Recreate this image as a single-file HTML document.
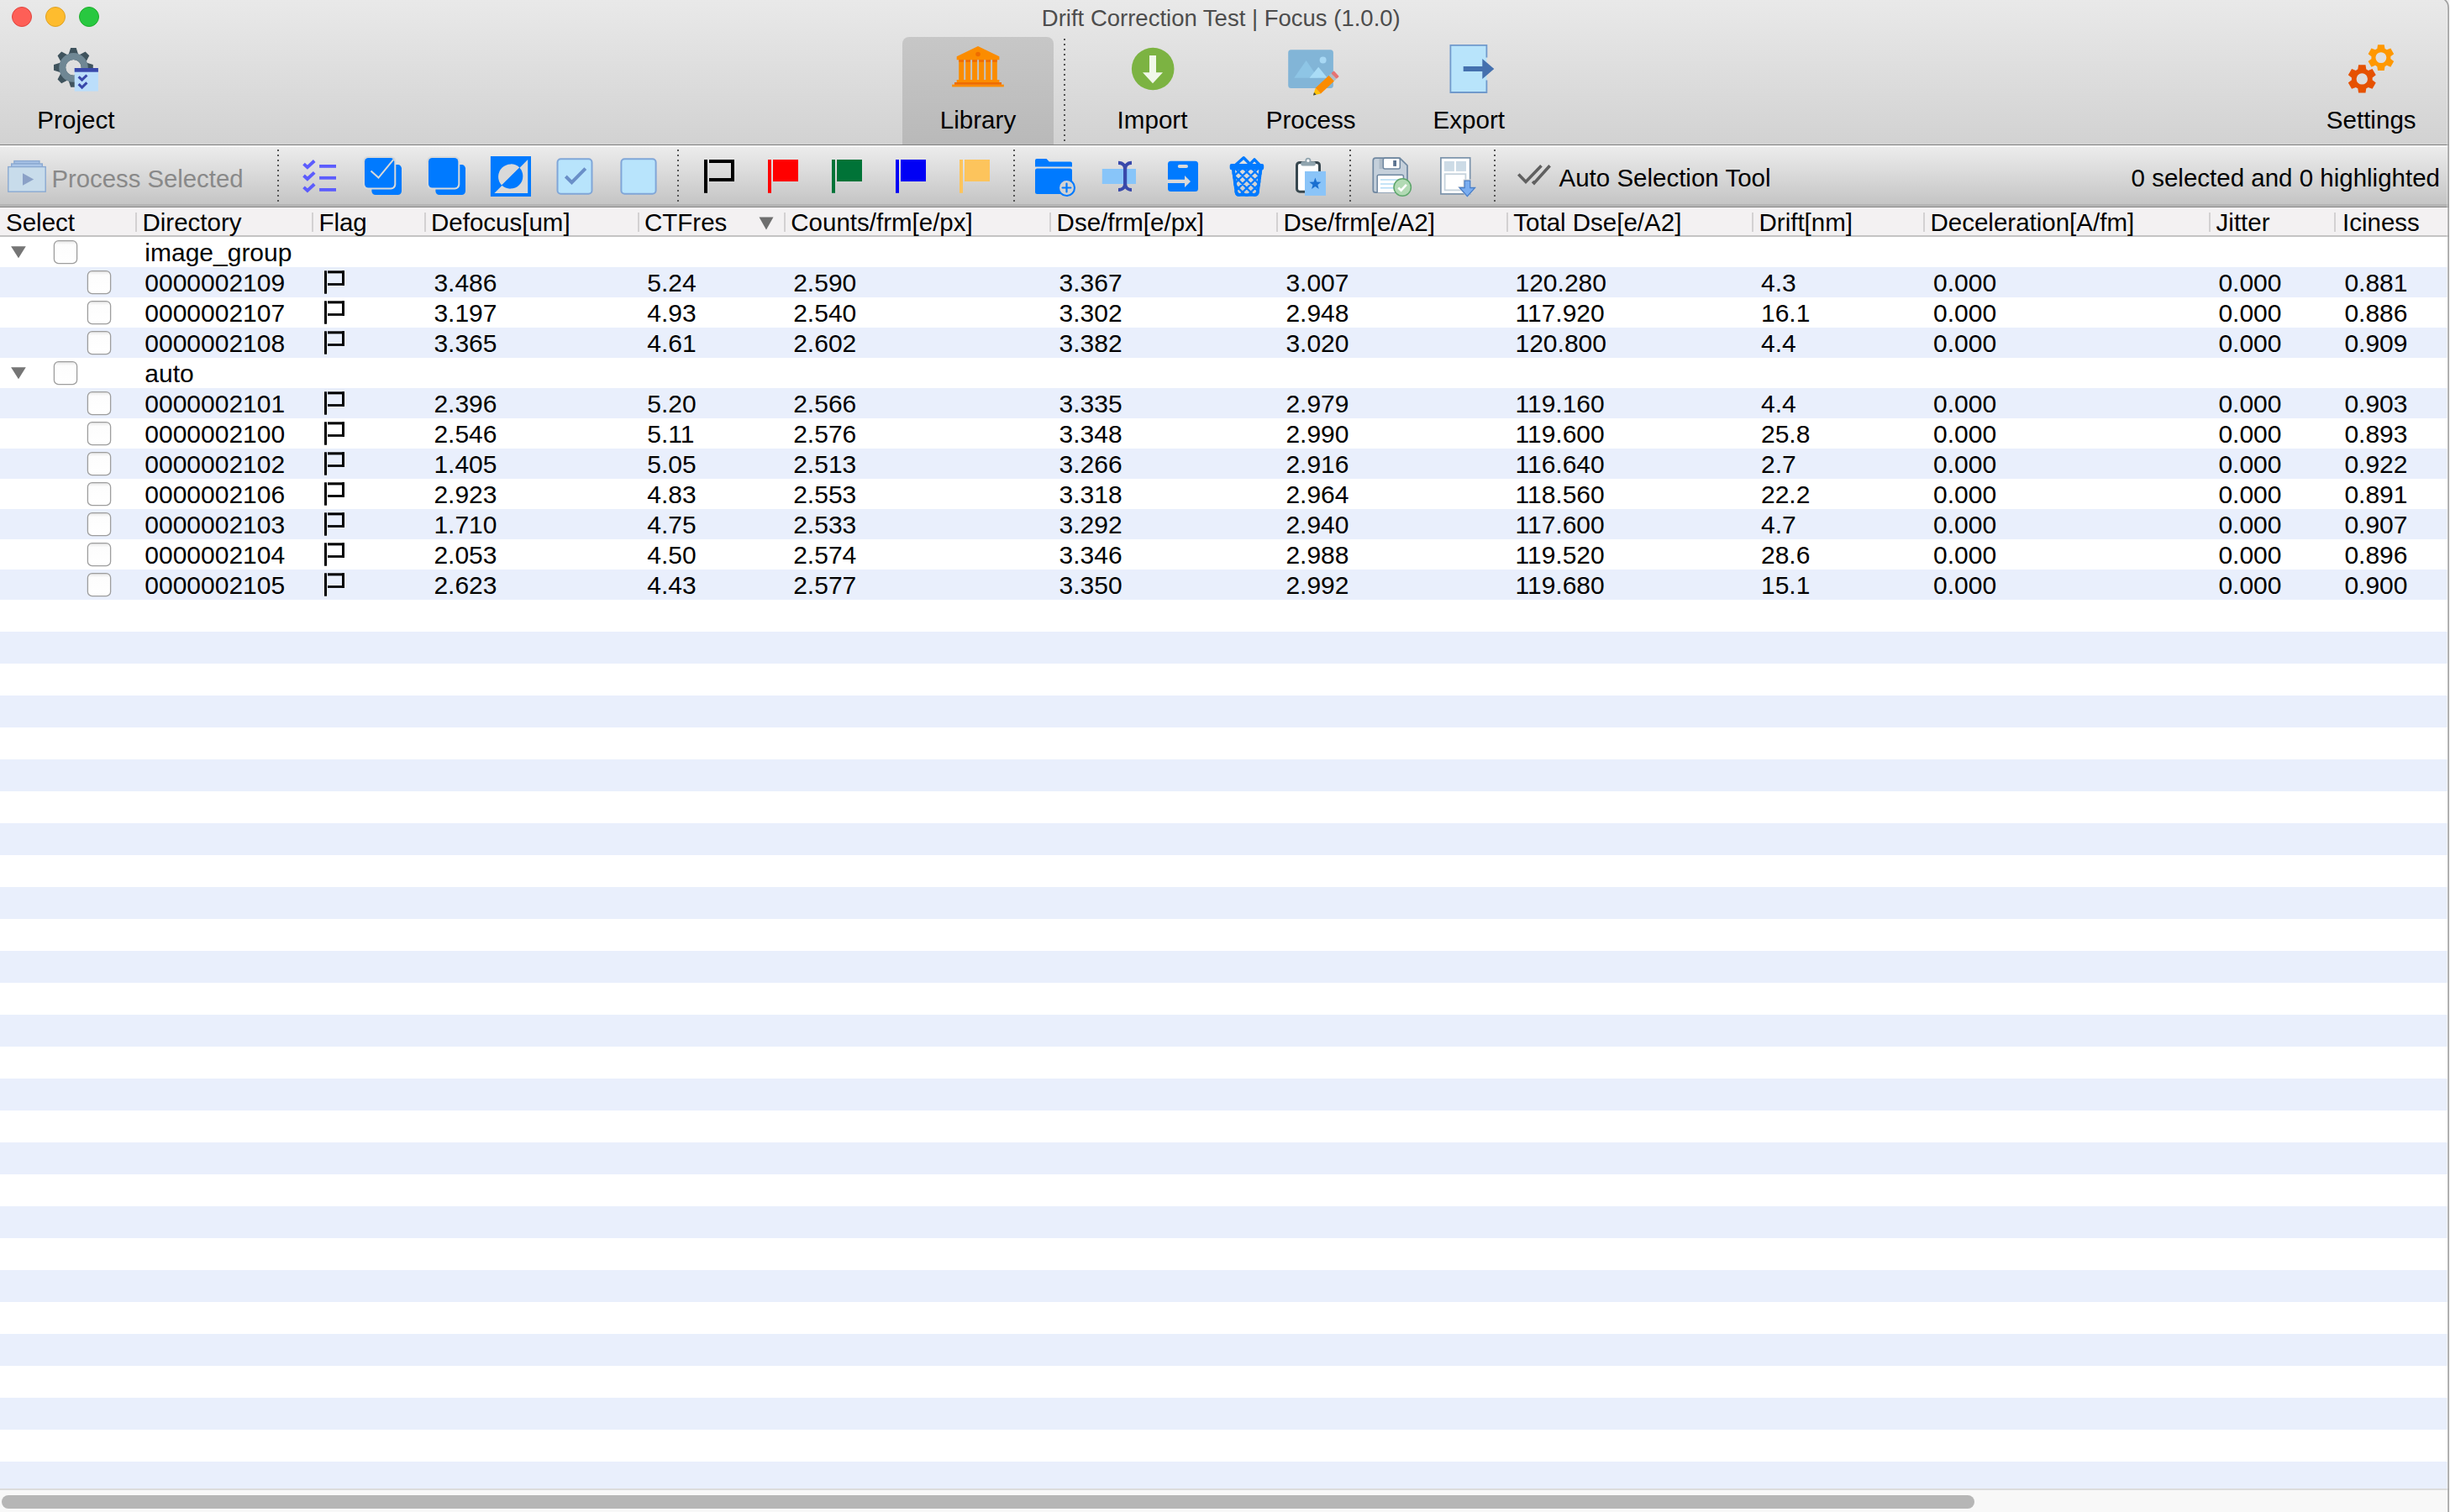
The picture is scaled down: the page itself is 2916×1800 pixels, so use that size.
<!DOCTYPE html><html><head><meta charset="utf-8"><title>Focus</title><style>
html,body{margin:0;padding:0;width:2916px;height:1800px;overflow:hidden;background:#fff;}
body{position:relative;font-family:"Liberation Sans", sans-serif;color:#000;}
.a{position:absolute;}
.t{position:absolute;white-space:nowrap;font-size:30px;line-height:36px;height:36px;}
.h{font-size:29.5px;}
.tb{position:absolute;white-space:nowrap;font-size:29px;line-height:36px;height:36px;}
svg{position:absolute;left:0;top:0;overflow:visible;}

</style></head><body>
<div class="a" style="left:0;top:0;width:2916px;height:172px;background:linear-gradient(#e9e9e9,#d2d2d2);"></div>
<div class="a" style="left:0;top:172px;width:2916px;height:1px;background:#808080;"></div>
<div class="a" style="left:0;top:173px;width:2916px;height:2px;background:#f6f6f6;"></div>
<div class="a" style="left:0;top:175px;width:2916px;height:68px;background:linear-gradient(#ececec,#c5c5c5);"></div>
<div class="a" style="left:0;top:243px;width:2916px;height:3px;background:#b4b4b4;"></div>
<div class="a" style="left:0;top:246px;width:2916px;height:1px;background:#8a8a8a;"></div>
<div class="a" style="left:0;top:247px;width:2916px;height:33px;background:#f3f1f2;"></div>
<div class="a" style="left:0;top:280px;width:2916px;height:2px;background:#c4c4c4;"></div>
<div class="a" style="left:1074px;top:44px;width:180px;height:128px;border-radius:8px 8px 0 0;background:linear-gradient(#c7c7c7,#b9b9b9);"></div>
<div class="a" style="left:0;top:1772px;width:2916px;height:2px;background:#dcdcdc;"></div>
<div class="a" style="left:0;top:1774px;width:2916px;height:26px;background:#f8f8f8;"></div>
<div class="a" style="left:2px;top:1780px;width:2348px;height:16px;border-radius:8px;background:#b6b6b6;"></div>
<div class="a" style="left:2915px;top:0;width:1px;height:1800px;background:#fafafa;"></div>

<div class="a" style="left:0;top:318px;width:2913px;height:36px;background:#e9effc;"></div>
<div class="a" style="left:0;top:390px;width:2913px;height:36px;background:#e9effc;"></div>
<div class="a" style="left:0;top:462px;width:2913px;height:36px;background:#e9effc;"></div>
<div class="a" style="left:0;top:534px;width:2913px;height:36px;background:#e9effc;"></div>
<div class="a" style="left:0;top:606px;width:2913px;height:36px;background:#e9effc;"></div>
<div class="a" style="left:0;top:678px;width:2913px;height:36px;background:#e9effc;"></div>
<div class="a" style="left:0;top:752px;width:2913px;height:38px;background:#e9effc;"></div>
<div class="a" style="left:0;top:828px;width:2913px;height:38px;background:#e9effc;"></div>
<div class="a" style="left:0;top:904px;width:2913px;height:38px;background:#e9effc;"></div>
<div class="a" style="left:0;top:980px;width:2913px;height:38px;background:#e9effc;"></div>
<div class="a" style="left:0;top:1056px;width:2913px;height:38px;background:#e9effc;"></div>
<div class="a" style="left:0;top:1132px;width:2913px;height:38px;background:#e9effc;"></div>
<div class="a" style="left:0;top:1208px;width:2913px;height:38px;background:#e9effc;"></div>
<div class="a" style="left:0;top:1284px;width:2913px;height:38px;background:#e9effc;"></div>
<div class="a" style="left:0;top:1360px;width:2913px;height:38px;background:#e9effc;"></div>
<div class="a" style="left:0;top:1436px;width:2913px;height:38px;background:#e9effc;"></div>
<div class="a" style="left:0;top:1512px;width:2913px;height:38px;background:#e9effc;"></div>
<div class="a" style="left:0;top:1588px;width:2913px;height:38px;background:#e9effc;"></div>
<div class="a" style="left:0;top:1664px;width:2913px;height:38px;background:#e9effc;"></div>
<div class="a" style="left:0;top:1740px;width:2913px;height:32px;background:#e9effc;"></div>
<div class="a" style="left:161px;top:253px;width:2px;height:23px;background:#d3d1d2;"></div>
<div class="a" style="left:371px;top:253px;width:2px;height:23px;background:#d3d1d2;"></div>
<div class="a" style="left:505px;top:253px;width:2px;height:23px;background:#d3d1d2;"></div>
<div class="a" style="left:759px;top:253px;width:2px;height:23px;background:#d3d1d2;"></div>
<div class="a" style="left:933px;top:253px;width:2px;height:23px;background:#d3d1d2;"></div>
<div class="a" style="left:1249px;top:253px;width:2px;height:23px;background:#d3d1d2;"></div>
<div class="a" style="left:1519px;top:253px;width:2px;height:23px;background:#d3d1d2;"></div>
<div class="a" style="left:1793px;top:253px;width:2px;height:23px;background:#d3d1d2;"></div>
<div class="a" style="left:2085px;top:253px;width:2px;height:23px;background:#d3d1d2;"></div>
<div class="a" style="left:2289px;top:253px;width:2px;height:23px;background:#d3d1d2;"></div>
<div class="a" style="left:2629px;top:253px;width:2px;height:23px;background:#d3d1d2;"></div>
<div class="a" style="left:2778px;top:253px;width:2px;height:23px;background:#d3d1d2;"></div>
<div class="t h" style="left:7.0px;top:247px;">Select</div>
<div class="t h" style="left:169.5px;top:247px;">Directory</div>
<div class="t h" style="left:379.4px;top:247px;">Flag</div>
<div class="t h" style="left:513.0px;top:247px;">Defocus[um]</div>
<div class="t h" style="left:767.0px;top:247px;">CTFres</div>
<div class="t h" style="left:941.3px;top:247px;">Counts/frm[e/px]</div>
<div class="t h" style="left:1257.6px;top:247px;">Dse/frm[e/px]</div>
<div class="t h" style="left:1527.5px;top:247px;">Dse/frm[e/A2]</div>
<div class="t h" style="left:1801.3px;top:247px;">Total Dse[e/A2]</div>
<div class="t h" style="left:2093.5px;top:247px;">Drift[nm]</div>
<div class="t h" style="left:2297.5px;top:247px;">Deceleration[A/fm]</div>
<div class="t h" style="left:2637.6px;top:247px;">Jitter</div>
<div class="t h" style="left:2788.0px;top:247px;">Iciness</div>
<svg width="2916" height="1800"><path d="M903.5 258.5 L920.5 258.5 L912 273.5 Z" fill="#6e6e6e"/></svg>
<div class="t" style="left:172.3px;top:283px;">image_group</div>
<div class="t" style="left:172.3px;top:319px;">0000002109</div>
<div class="t" style="left:516.4px;top:319px;">3.486</div>
<div class="t" style="left:770.3px;top:319px;">5.24</div>
<div class="t" style="left:944.2px;top:319px;">2.590</div>
<div class="t" style="left:1260.5px;top:319px;">3.367</div>
<div class="t" style="left:1530.4px;top:319px;">3.007</div>
<div class="t" style="left:1803.5px;top:319px;">120.280</div>
<div class="t" style="left:2096.0px;top:319px;">4.3</div>
<div class="t" style="left:2301.0px;top:319px;">0.000</div>
<div class="t" style="left:2640.4px;top:319px;">0.000</div>
<div class="t" style="left:2790.4px;top:319px;">0.881</div>
<div class="t" style="left:172.3px;top:355px;">0000002107</div>
<div class="t" style="left:516.4px;top:355px;">3.197</div>
<div class="t" style="left:770.3px;top:355px;">4.93</div>
<div class="t" style="left:944.2px;top:355px;">2.540</div>
<div class="t" style="left:1260.5px;top:355px;">3.302</div>
<div class="t" style="left:1530.4px;top:355px;">2.948</div>
<div class="t" style="left:1803.5px;top:355px;">117.920</div>
<div class="t" style="left:2096.0px;top:355px;">16.1</div>
<div class="t" style="left:2301.0px;top:355px;">0.000</div>
<div class="t" style="left:2640.4px;top:355px;">0.000</div>
<div class="t" style="left:2790.4px;top:355px;">0.886</div>
<div class="t" style="left:172.3px;top:391px;">0000002108</div>
<div class="t" style="left:516.4px;top:391px;">3.365</div>
<div class="t" style="left:770.3px;top:391px;">4.61</div>
<div class="t" style="left:944.2px;top:391px;">2.602</div>
<div class="t" style="left:1260.5px;top:391px;">3.382</div>
<div class="t" style="left:1530.4px;top:391px;">3.020</div>
<div class="t" style="left:1803.5px;top:391px;">120.800</div>
<div class="t" style="left:2096.0px;top:391px;">4.4</div>
<div class="t" style="left:2301.0px;top:391px;">0.000</div>
<div class="t" style="left:2640.4px;top:391px;">0.000</div>
<div class="t" style="left:2790.4px;top:391px;">0.909</div>
<div class="t" style="left:172.3px;top:427px;">auto</div>
<div class="t" style="left:172.3px;top:463px;">0000002101</div>
<div class="t" style="left:516.4px;top:463px;">2.396</div>
<div class="t" style="left:770.3px;top:463px;">5.20</div>
<div class="t" style="left:944.2px;top:463px;">2.566</div>
<div class="t" style="left:1260.5px;top:463px;">3.335</div>
<div class="t" style="left:1530.4px;top:463px;">2.979</div>
<div class="t" style="left:1803.5px;top:463px;">119.160</div>
<div class="t" style="left:2096.0px;top:463px;">4.4</div>
<div class="t" style="left:2301.0px;top:463px;">0.000</div>
<div class="t" style="left:2640.4px;top:463px;">0.000</div>
<div class="t" style="left:2790.4px;top:463px;">0.903</div>
<div class="t" style="left:172.3px;top:499px;">0000002100</div>
<div class="t" style="left:516.4px;top:499px;">2.546</div>
<div class="t" style="left:770.3px;top:499px;">5.11</div>
<div class="t" style="left:944.2px;top:499px;">2.576</div>
<div class="t" style="left:1260.5px;top:499px;">3.348</div>
<div class="t" style="left:1530.4px;top:499px;">2.990</div>
<div class="t" style="left:1803.5px;top:499px;">119.600</div>
<div class="t" style="left:2096.0px;top:499px;">25.8</div>
<div class="t" style="left:2301.0px;top:499px;">0.000</div>
<div class="t" style="left:2640.4px;top:499px;">0.000</div>
<div class="t" style="left:2790.4px;top:499px;">0.893</div>
<div class="t" style="left:172.3px;top:535px;">0000002102</div>
<div class="t" style="left:516.4px;top:535px;">1.405</div>
<div class="t" style="left:770.3px;top:535px;">5.05</div>
<div class="t" style="left:944.2px;top:535px;">2.513</div>
<div class="t" style="left:1260.5px;top:535px;">3.266</div>
<div class="t" style="left:1530.4px;top:535px;">2.916</div>
<div class="t" style="left:1803.5px;top:535px;">116.640</div>
<div class="t" style="left:2096.0px;top:535px;">2.7</div>
<div class="t" style="left:2301.0px;top:535px;">0.000</div>
<div class="t" style="left:2640.4px;top:535px;">0.000</div>
<div class="t" style="left:2790.4px;top:535px;">0.922</div>
<div class="t" style="left:172.3px;top:571px;">0000002106</div>
<div class="t" style="left:516.4px;top:571px;">2.923</div>
<div class="t" style="left:770.3px;top:571px;">4.83</div>
<div class="t" style="left:944.2px;top:571px;">2.553</div>
<div class="t" style="left:1260.5px;top:571px;">3.318</div>
<div class="t" style="left:1530.4px;top:571px;">2.964</div>
<div class="t" style="left:1803.5px;top:571px;">118.560</div>
<div class="t" style="left:2096.0px;top:571px;">22.2</div>
<div class="t" style="left:2301.0px;top:571px;">0.000</div>
<div class="t" style="left:2640.4px;top:571px;">0.000</div>
<div class="t" style="left:2790.4px;top:571px;">0.891</div>
<div class="t" style="left:172.3px;top:607px;">0000002103</div>
<div class="t" style="left:516.4px;top:607px;">1.710</div>
<div class="t" style="left:770.3px;top:607px;">4.75</div>
<div class="t" style="left:944.2px;top:607px;">2.533</div>
<div class="t" style="left:1260.5px;top:607px;">3.292</div>
<div class="t" style="left:1530.4px;top:607px;">2.940</div>
<div class="t" style="left:1803.5px;top:607px;">117.600</div>
<div class="t" style="left:2096.0px;top:607px;">4.7</div>
<div class="t" style="left:2301.0px;top:607px;">0.000</div>
<div class="t" style="left:2640.4px;top:607px;">0.000</div>
<div class="t" style="left:2790.4px;top:607px;">0.907</div>
<div class="t" style="left:172.3px;top:643px;">0000002104</div>
<div class="t" style="left:516.4px;top:643px;">2.053</div>
<div class="t" style="left:770.3px;top:643px;">4.50</div>
<div class="t" style="left:944.2px;top:643px;">2.574</div>
<div class="t" style="left:1260.5px;top:643px;">3.346</div>
<div class="t" style="left:1530.4px;top:643px;">2.988</div>
<div class="t" style="left:1803.5px;top:643px;">119.520</div>
<div class="t" style="left:2096.0px;top:643px;">28.6</div>
<div class="t" style="left:2301.0px;top:643px;">0.000</div>
<div class="t" style="left:2640.4px;top:643px;">0.000</div>
<div class="t" style="left:2790.4px;top:643px;">0.896</div>
<div class="t" style="left:172.3px;top:679px;">0000002105</div>
<div class="t" style="left:516.4px;top:679px;">2.623</div>
<div class="t" style="left:770.3px;top:679px;">4.43</div>
<div class="t" style="left:944.2px;top:679px;">2.577</div>
<div class="t" style="left:1260.5px;top:679px;">3.350</div>
<div class="t" style="left:1530.4px;top:679px;">2.992</div>
<div class="t" style="left:1803.5px;top:679px;">119.680</div>
<div class="t" style="left:2096.0px;top:679px;">15.1</div>
<div class="t" style="left:2301.0px;top:679px;">0.000</div>
<div class="t" style="left:2640.4px;top:679px;">0.000</div>
<div class="t" style="left:2790.4px;top:679px;">0.900</div>
<div class="a" style="left:1053.3px;top:3.5px;width:800px;text-align:center;white-space:nowrap;font-size:27.5px;line-height:36px;color:#4d4d4d;">Drift Correction Test | Focus (1.0.0)</div>
<div class="a" style="left:-109.6px;top:124.6px;width:400px;text-align:center;white-space:nowrap;font-size:29.6px;line-height:36px;color:#000;">Project</div>
<div class="a" style="left:964.0px;top:124.6px;width:400px;text-align:center;white-space:nowrap;font-size:29.6px;line-height:36px;color:#000;">Library</div>
<div class="a" style="left:1171.5px;top:124.6px;width:400px;text-align:center;white-space:nowrap;font-size:29.6px;line-height:36px;color:#000;">Import</div>
<div class="a" style="left:1360.2px;top:124.6px;width:400px;text-align:center;white-space:nowrap;font-size:29.6px;line-height:36px;color:#000;">Process</div>
<div class="a" style="left:1548.3px;top:124.6px;width:400px;text-align:center;white-space:nowrap;font-size:29.6px;line-height:36px;color:#000;">Export</div>
<div class="a" style="left:2622.2px;top:124.6px;width:400px;text-align:center;white-space:nowrap;font-size:29.6px;line-height:36px;color:#000;">Settings</div>
<div class="a" style="left:61.5px;top:194.5px;white-space:nowrap;font-size:29.3px;line-height:36px;color:#898989;">Process Selected</div>
<div class="a" style="left:1855.5px;top:194px;white-space:nowrap;font-size:29.5px;line-height:36px;color:#000;">Auto Selection Tool</div>
<div class="a" style="left:2300px;width:604px;text-align:right;top:194px;white-space:nowrap;font-size:29.5px;line-height:36px;">0 selected and 0 highlighted</div>
<svg width="2916" height="1800" viewBox="0 0 2916 1800">
<circle cx="26" cy="20" r="11.5" fill="#fe5f57" stroke="#e0443e" stroke-width="1"/>
<circle cx="66" cy="20" r="11.5" fill="#febc2e" stroke="#dea123" stroke-width="1"/>
<circle cx="106" cy="20" r="11.5" fill="#28c840" stroke="#1dad2b" stroke-width="1"/>
<path fill="#3f535d" fill-rule="evenodd" d="M81.50 65.21L84.10 57.03L90.70 57.03L93.30 65.21A16.3 16.3 0 0 1 93.97 65.48L101.59 61.54L106.26 66.21L102.32 73.83A16.3 16.3 0 0 1 102.59 74.50L110.77 77.10L110.77 83.70L102.59 86.30A16.3 16.3 0 0 1 102.32 86.97L106.26 94.59L101.59 99.26L93.97 95.32A16.3 16.3 0 0 1 93.30 95.59L90.70 103.77L84.10 103.77L81.50 95.59A16.3 16.3 0 0 1 80.83 95.32L73.21 99.26L68.54 94.59L72.48 86.97A16.3 16.3 0 0 1 72.21 86.30L64.03 83.70L64.03 77.10L72.21 74.50A16.3 16.3 0 0 1 72.48 73.83L68.54 66.21L73.21 61.54L80.83 65.48A16.3 16.3 0 0 1 81.50 65.21ZM78.10 80.40a9.3 9.3 0 1 0 18.60 0a9.3 9.3 0 1 0 -18.60 0Z"/>
<path fill="#6f8794" fill-rule="evenodd" d="M70.2 80.4a17.3 17.3 0 1 0 34.6 0a17.3 17.3 0 1 0 -34.6 0Z M78.2 80.4a9.3 9.3 0 1 0 18.6 0a9.3 9.3 0 1 0 -18.6 0Z"/>
<rect x="88.7" y="81" width="28.2" height="27.6" fill="#bbdefb"/>
<rect x="88.7" y="81" width="28.2" height="4.7" fill="#3949ab"/>
<path d="M93.6 91.3 L97.6 95.1 L103.4 89.5 M93.6 100.2 L97.6 104 L103.4 98.4" fill="none" stroke="#3949ab" stroke-width="3.1"/>
<g fill="#fb8c00"><path d="M1164 55 L1189.4 67.2 L1189.4 71.2 L1138.7 71.2 L1138.7 67.2 Z"/><rect x="1141.2" y="71.2" width="45.6" height="23.8"/><rect x="1138.7" y="95" width="50.7" height="3.2"/><rect x="1133.2" y="100.6" width="61.6" height="2.8"/></g>
<circle cx="1164" cy="64.5" r="2.8" fill="#ef6c00"/>
<rect x="1141.2" y="71.2" width="45.6" height="2.6" fill="#ef6c00"/>
<rect x="1136" y="98" width="56" height="2.8" fill="#ef6c00"/>
<rect x="1147.2" y="71.2" width="2" height="23.8" fill="#c3c3c3"/>
<rect x="1155.1" y="71.2" width="2" height="23.8" fill="#c3c3c3"/>
<rect x="1163.1" y="71.2" width="2" height="23.8" fill="#c3c3c3"/>
<rect x="1171.2" y="71.2" width="2" height="23.8" fill="#c3c3c3"/>
<rect x="1179.1" y="71.2" width="2" height="23.8" fill="#c3c3c3"/>
<circle cx="1372.2" cy="82" r="25.3" fill="#7cb342"/>
<path d="M1368 66 H1376 V86.3 H1384 L1372 99.2 L1360 86.3 H1368 Z" fill="#f1f8e9"/>
<rect x="1533.2" y="59.2" width="53.7" height="45.8" rx="3.5" fill="#82b5d7"/>
<path d="M1540.3 92.8 L1554.6 72 L1568.9 92.8 Z" fill="#8ec5e5"/>
<path d="M1558.6 92.8 L1569.2 79.8 L1579.8 92.8 Z" fill="#a9dcf6"/>
<circle cx="1574.6" cy="71.4" r="4" fill="#a8d8f4"/>
<g transform="translate(1563,113.6) rotate(-43.2)"><path d="M0 0 L8 -4.6 L8 4.6 Z" fill="#ffc107"/><path d="M0 0 L3.2 -1.8 L3.2 1.8 Z" fill="#37474f"/><rect x="8" y="-4.6" width="22" height="9.2" fill="#fb8c00"/><rect x="30" y="-4.6" width="3.6" height="9.2" fill="#b0bec5"/><rect x="33.6" y="-4.6" width="4.4" height="9.2" rx="1" fill="#e57373"/></g>
<rect x="1726.4" y="53.9" width="43" height="56.1" fill="#b8e4fb"/>
<path d="M1769.4 68.6 V53.9 H1726.4 V110 H1769.4 V95.4" fill="none" stroke="#7099cb" stroke-width="1.8"/>
<path d="M1741.7 79 H1764.3 V70 L1778.3 82 L1764.3 93.9 V85 H1741.7 Z" fill="#4470ae"/>
<path fill="#ff9800" fill-rule="evenodd" d="M2829.30 58.06L2830.05 53.17L2837.75 53.17L2838.50 58.06A11.5 11.5 0 0 1 2840.73 59.35L2845.34 57.55L2849.19 64.22L2845.33 67.31A11.5 11.5 0 0 1 2845.33 69.89L2849.19 72.98L2845.34 79.65L2840.73 77.85A11.5 11.5 0 0 1 2838.50 79.14L2837.75 84.03L2830.05 84.03L2829.30 79.14A11.5 11.5 0 0 1 2827.07 77.85L2822.46 79.65L2818.61 72.98L2822.47 69.89A11.5 11.5 0 0 1 2822.47 67.31L2818.61 64.22L2822.46 57.55L2827.07 59.35A11.5 11.5 0 0 1 2829.30 58.06ZM2827.45 68.60a6.45 6.45 0 1 0 12.90 0a6.45 6.45 0 1 0 -12.90 0Z"/>
<path fill="#e65100" fill-rule="evenodd" d="M2806.30 82.55L2807.10 77.32L2815.50 77.32L2816.30 82.55A12.4 12.4 0 0 1 2818.63 83.90L2823.56 81.97L2827.76 89.25L2823.63 92.56A12.4 12.4 0 0 1 2823.63 95.24L2827.76 98.55L2823.56 105.83L2818.63 103.90A12.4 12.4 0 0 1 2816.30 105.25L2815.50 110.48L2807.10 110.48L2806.30 105.25A12.4 12.4 0 0 1 2803.97 103.90L2799.04 105.83L2794.84 98.55L2798.97 95.24A12.4 12.4 0 0 1 2798.97 92.56L2794.84 89.25L2799.04 81.97L2803.97 83.90A12.4 12.4 0 0 1 2806.30 82.55ZM2804.60 93.90a6.7 6.7 0 1 0 13.40 0a6.7 6.7 0 1 0 -13.40 0Z"/>
<rect x="1266" y="46" width="2" height="2" fill="#555"/><rect x="1266" y="52" width="2" height="2" fill="#555"/><rect x="1266" y="58" width="2" height="2" fill="#555"/><rect x="1266" y="64" width="2" height="2" fill="#555"/><rect x="1266" y="70" width="2" height="2" fill="#555"/><rect x="1266" y="76" width="2" height="2" fill="#555"/><rect x="1266" y="82" width="2" height="2" fill="#555"/><rect x="1266" y="88" width="2" height="2" fill="#555"/><rect x="1266" y="94" width="2" height="2" fill="#555"/><rect x="1266" y="100" width="2" height="2" fill="#555"/><rect x="1266" y="106" width="2" height="2" fill="#555"/><rect x="1266" y="112" width="2" height="2" fill="#555"/><rect x="1266" y="118" width="2" height="2" fill="#555"/><rect x="1266" y="124" width="2" height="2" fill="#555"/><rect x="1266" y="130" width="2" height="2" fill="#555"/><rect x="1266" y="136" width="2" height="2" fill="#555"/><rect x="1266" y="142" width="2" height="2" fill="#555"/><rect x="1266" y="148" width="2" height="2" fill="#555"/><rect x="1266" y="154" width="2" height="2" fill="#555"/><rect x="1266" y="160" width="2" height="2" fill="#555"/><rect x="1266" y="166" width="2" height="2" fill="#555"/>
<rect x="330" y="178" width="2" height="2" fill="#555"/><rect x="330" y="184" width="2" height="2" fill="#555"/><rect x="330" y="190" width="2" height="2" fill="#555"/><rect x="330" y="196" width="2" height="2" fill="#555"/><rect x="330" y="202" width="2" height="2" fill="#555"/><rect x="330" y="208" width="2" height="2" fill="#555"/><rect x="330" y="214" width="2" height="2" fill="#555"/><rect x="330" y="220" width="2" height="2" fill="#555"/><rect x="330" y="226" width="2" height="2" fill="#555"/><rect x="330" y="232" width="2" height="2" fill="#555"/><rect x="330" y="238" width="2" height="2" fill="#555"/>
<rect x="806" y="178" width="2" height="2" fill="#555"/><rect x="806" y="184" width="2" height="2" fill="#555"/><rect x="806" y="190" width="2" height="2" fill="#555"/><rect x="806" y="196" width="2" height="2" fill="#555"/><rect x="806" y="202" width="2" height="2" fill="#555"/><rect x="806" y="208" width="2" height="2" fill="#555"/><rect x="806" y="214" width="2" height="2" fill="#555"/><rect x="806" y="220" width="2" height="2" fill="#555"/><rect x="806" y="226" width="2" height="2" fill="#555"/><rect x="806" y="232" width="2" height="2" fill="#555"/><rect x="806" y="238" width="2" height="2" fill="#555"/>
<rect x="1206" y="178" width="2" height="2" fill="#555"/><rect x="1206" y="184" width="2" height="2" fill="#555"/><rect x="1206" y="190" width="2" height="2" fill="#555"/><rect x="1206" y="196" width="2" height="2" fill="#555"/><rect x="1206" y="202" width="2" height="2" fill="#555"/><rect x="1206" y="208" width="2" height="2" fill="#555"/><rect x="1206" y="214" width="2" height="2" fill="#555"/><rect x="1206" y="220" width="2" height="2" fill="#555"/><rect x="1206" y="226" width="2" height="2" fill="#555"/><rect x="1206" y="232" width="2" height="2" fill="#555"/><rect x="1206" y="238" width="2" height="2" fill="#555"/>
<rect x="1606" y="178" width="2" height="2" fill="#555"/><rect x="1606" y="184" width="2" height="2" fill="#555"/><rect x="1606" y="190" width="2" height="2" fill="#555"/><rect x="1606" y="196" width="2" height="2" fill="#555"/><rect x="1606" y="202" width="2" height="2" fill="#555"/><rect x="1606" y="208" width="2" height="2" fill="#555"/><rect x="1606" y="214" width="2" height="2" fill="#555"/><rect x="1606" y="220" width="2" height="2" fill="#555"/><rect x="1606" y="226" width="2" height="2" fill="#555"/><rect x="1606" y="232" width="2" height="2" fill="#555"/><rect x="1606" y="238" width="2" height="2" fill="#555"/>
<rect x="1778" y="178" width="2" height="2" fill="#555"/><rect x="1778" y="184" width="2" height="2" fill="#555"/><rect x="1778" y="190" width="2" height="2" fill="#555"/><rect x="1778" y="196" width="2" height="2" fill="#555"/><rect x="1778" y="202" width="2" height="2" fill="#555"/><rect x="1778" y="208" width="2" height="2" fill="#555"/><rect x="1778" y="214" width="2" height="2" fill="#555"/><rect x="1778" y="220" width="2" height="2" fill="#555"/><rect x="1778" y="226" width="2" height="2" fill="#555"/><rect x="1778" y="232" width="2" height="2" fill="#555"/><rect x="1778" y="238" width="2" height="2" fill="#555"/>
<g stroke="#8ba9d1" stroke-width="1.4"><rect x="16.9" y="191.6" width="30" height="3.4" fill="#a5c1e6"/><rect x="13.7" y="195" width="36.6" height="3.6" fill="#aec9ea"/><rect x="9.8" y="198.6" width="44.4" height="29.6" fill="#c8dceb"/></g>
<path d="M27 206.3 L40.2 213.5 L27 220.8 Z" fill="#8ba1c7"/>
<g stroke="#5c5cfd" stroke-width="3.9" fill="none" stroke-linecap="butt" stroke-linejoin="miter"><path d="M361.5 195.1 L365.9 199.1 L374.2 191.5"/><path d="M361.5 209.0 L365.9 213.0 L374.2 205.4"/><path d="M361.5 222.9 L365.9 226.9 L374.2 219.3"/></g>
<g fill="#5c5cfd"><rect x="380.1" y="196" width="19.9" height="3.8"/><rect x="380.1" y="209.9" width="19.9" height="3.8"/><rect x="380.1" y="224" width="19.9" height="3.8"/></g>
<rect x="442.4" y="196.1" width="35.6" height="35.9" rx="4.5" fill="#007aff"/>
<rect x="432" y="186" width="39.3" height="39.5" rx="6" fill="#d9d9d9"/>
<rect x="434" y="188" width="35.3" height="35.5" rx="4.5" fill="#007aff"/>
<path d="M441.5 203.5 L450.5 211.6 L468.6 189.6" fill="none" stroke="#d9d9d9" stroke-width="2"/>
<rect x="518.4" y="196.1" width="35.6" height="35.9" rx="4.5" fill="#007aff"/>
<rect x="508" y="186" width="39.3" height="39.5" rx="6" fill="#d9d9d9"/>
<rect x="510" y="188" width="35.3" height="35.5" rx="4.5" fill="#007aff"/>
<rect x="583.9" y="186" width="48.1" height="48" fill="#007aff"/>
<path d="M588.4 230 L628.2 230 L628.2 190.1 Z" fill="#d9d9d9"/>
<path d="M597.1 220.6 A15 15 0 0 1 618.3 199.4 Z" fill="#d9d9d9"/>
<path d="M597.1 220.6 A15 15 0 0 0 618.3 199.4 Z" fill="#007aff"/>
<rect x="663.5" y="189.3" width="41" height="41.5" rx="4" fill="#b8e4fc" stroke="#80a6d8" stroke-width="2"/>
<path d="M673.3 210 L680.5 217.2 L696.8 200.6" fill="none" stroke="#6a8fc8" stroke-width="4"/>
<rect x="739.4" y="189.3" width="41.2" height="41.5" rx="4" fill="#b8e4fc" stroke="#80a6d8" stroke-width="2"/>
<g fill="#000"><rect x="838" y="190" width="4" height="39.8"/><rect x="844" y="190" width="30" height="4"/><rect x="844" y="212" width="30" height="4"/><rect x="870" y="190" width="4" height="26"/></g>
<g fill="#ff0000"><rect x="914" y="190" width="4" height="39.8"/><rect x="920" y="190" width="30" height="26"/></g>
<g fill="#007337"><rect x="990" y="190" width="4" height="39.8"/><rect x="996" y="190" width="30" height="26"/></g>
<g fill="#0000f5"><rect x="1066" y="190" width="4" height="39.8"/><rect x="1072" y="190" width="30" height="26"/></g>
<g fill="#fdc45c"><rect x="1142" y="190" width="4" height="39.8"/><rect x="1148" y="190" width="30" height="26"/></g>
<path d="M1232 191 Q1232 188.9 1234 188.9 L1245.5 188.9 L1248.8 192.5 L1274 192.5 Q1276 192.5 1276 194.5 L1276 198.5 L1232 198.5 Z" fill="#007aff"/>
<rect x="1232" y="200.4" width="44" height="30.7" rx="2.5" fill="#007aff"/>
<circle cx="1269.5" cy="223.5" r="9.5" fill="#d2d2d2" stroke="#007aff" stroke-width="2.1"/>
<path d="M1264.6 223.5 H1274.4 M1269.5 218.6 V228.4" stroke="#007aff" stroke-width="2.2" stroke-linecap="round"/>
<rect x="1311.8" y="201" width="40.2" height="18" fill="#88c5f9"/>
<path d="M1331 191.8 Q1336 191.8 1339.1 195.2 Q1342.2 191.8 1347 191.8 V196 Q1341.2 196 1341.2 201 V219 Q1341.2 224 1347 224 V228 Q1342.2 228 1339.1 224.6 Q1336 228 1331 228 V224 Q1337 224 1337 219 V201 Q1337 196 1331 196 Z" fill="#3949ab"/>
<rect x="1390" y="191.8" width="36" height="36.2" rx="3.5" fill="#007aff"/>
<rect x="1401.8" y="196" width="12.2" height="4.1" rx="2" fill="#d9d9d9"/>
<path d="M1389 213.8 H1410 V209 L1417 216 L1410 223 V218 H1389 Z" fill="#d9d9d9"/>
<defs><clipPath id="basket"><path d="M1466 202 L1502.3 202 L1498.6 229.3 Q1498 233.8 1493.5 233.8 L1474.8 233.8 Q1470.3 233.8 1469.7 229.3 Z"/></clipPath></defs>
<path clip-path="url(#basket)" d="M1415.6 195 L1460.6 240 M1444.2 195 L1399.2 240 M1425.4 195 L1470.4 240 M1454.0 195 L1409.0 240 M1435.2 195 L1480.2 240 M1463.8 195 L1418.8 240 M1445.0 195 L1490.0 240 M1473.6 195 L1428.6 240 M1454.8 195 L1499.8 240 M1483.4 195 L1438.4 240 M1464.6 195 L1509.6 240 M1493.2 195 L1448.2 240 M1474.4 195 L1519.4 240 M1503.0 195 L1458.0 240 M1484.2 195 L1529.2 240 M1512.8 195 L1467.8 240 M1494.0 195 L1539.0 240 M1522.6 195 L1477.6 240 M1503.8 195 L1548.8 240 M1532.4 195 L1487.4 240 M1513.6 195 L1558.6 240 M1542.2 195 L1497.2 240 " stroke="#007aff" stroke-width="2.3"/>
<path fill-rule="evenodd" fill="#007aff" d="M1466 202 L1502.3 202 L1498.6 229.3 Q1498 233.8 1493.5 233.8 L1474.8 233.8 Q1470.3 233.8 1469.7 229.3 Z M1469.8 201 L1498.5 201 L1495.2 227.2 Q1494.8 230.2 1491.6 230.2 L1476.7 230.2 Q1473.5 230.2 1473.1 227.2 Z"/>
<path d="M1470.5 196.5 L1480.2 187.8 L1488.8 196.5 M1486.8 196.5 L1493 189.8 L1499.3 196.5" fill="none" stroke="#007aff" stroke-width="3.4" stroke-linejoin="round"/>
<rect x="1463.7" y="194.9" width="40.5" height="7.4" rx="2.2" fill="#007aff"/>
<rect x="1543.5" y="193.4" width="27" height="34.9" rx="3.5" fill="#fff" stroke="#37474f" stroke-width="3"/>
<rect x="1548.3" y="192.2" width="17.5" height="5.4" rx="2" fill="#90a4ae"/>
<circle cx="1556.9" cy="191.2" r="2.6" fill="#fff" stroke="#90a4ae" stroke-width="1.8"/>
<rect x="1553" y="203.9" width="25" height="29" fill="#8ac4f8"/>
<polygon points="1565.40,211.60 1567.22,216.49 1572.44,216.71 1568.35,219.96 1569.75,224.99 1565.40,222.10 1561.05,224.99 1562.45,219.96 1558.36,216.71 1563.58,216.49" fill="#1a6fd0"/>
<path d="M1637.3 188.1 H1666 L1675 197 V226.2 Q1675 229.2 1672 229.2 H1637.3 Q1634.3 229.2 1634.3 226.2 V191.1 Q1634.3 188.1 1637.3 188.1 Z" fill="#c5d0db" stroke="#6f87a0" stroke-width="1.7"/>
<rect x="1641.5" y="189" width="4.5" height="12" fill="#aebbc8"/>
<rect x="1646.3" y="188.3" width="20" height="12.6" rx="2" fill="#fff" stroke="#6f87a0" stroke-width="1.5"/>
<rect x="1658.2" y="191" width="3.8" height="6.9" fill="#5b7390"/>
<path d="M1639.2 229.2 V210 Q1639.2 208.2 1641 208.2 H1668.6 Q1670.4 208.2 1670.4 210 V229.2" fill="#fff" stroke="#6f87a0" stroke-width="1.5"/>
<path d="M1643 214 H1665 M1643 219 H1665 M1643 223.8 H1665" stroke="#b3dcf5" stroke-width="1.5"/>
<circle cx="1669.2" cy="223" r="10.2" fill="#b2dab4" stroke="#5ea66b" stroke-width="1.5"/>
<path d="M1664.3 223.5 L1667.6 226.6 L1673.9 219.8" fill="none" stroke="#fff" stroke-width="2.6"/>
<rect x="1714.9" y="187.9" width="34.8" height="43" fill="#fff" stroke="#7b93ab" stroke-width="1.7"/>
<rect x="1718.8" y="191.9" width="12.1" height="12" fill="#ccdbe6"/><rect x="1733" y="191.9" width="12" height="12" fill="#ccdbe6"/>
<rect x="1719.6" y="207.2" width="24.8" height="19.2" fill="#fff" stroke="#c5d2dc" stroke-width="1.8"/>
<path d="M1741.5 213.5 H1751.5 V222 H1758 L1746.4 235.5 L1734.8 222 H1741.5 Z" fill="#d9d9d9"/>
<path d="M1743.2 215.2 H1749.8 V223.5 H1755.6 L1746.4 233.8 L1737.2 223.5 H1743.2 Z" fill="#7aadf0" stroke="#4a7fc8" stroke-width="1.3"/>
<path d="M1807.3 207.4 L1816 216.4 L1834.5 197.3 M1824.1 215.9 L1826 217.9 L1844.6 197.3" fill="none" stroke="#606060" stroke-width="3.6"/>
<path d="M13.1 293.2 L30.8 293.2 L22 307.2 Z" fill="#757575"/>
<rect x="64.4" y="286.6" width="27.2" height="27" rx="5.2" fill="url(#cbg)" stroke="#9d9d9d" stroke-width="1.3"/>
<g fill="#000"><rect x="386" y="322.3" width="3" height="27.4"/><rect x="390" y="322.3" width="20" height="3.1"/><rect x="407" y="322.3" width="3" height="17.6"/><rect x="390" y="337.1" width="20" height="2.8"/></g>
<rect x="104.4" y="322.6" width="27.2" height="27" rx="5.2" fill="url(#cbg)" stroke="#9d9d9d" stroke-width="1.3"/>
<g fill="#000"><rect x="386" y="358.3" width="3" height="27.4"/><rect x="390" y="358.3" width="20" height="3.1"/><rect x="407" y="358.3" width="3" height="17.6"/><rect x="390" y="373.1" width="20" height="2.8"/></g>
<rect x="104.4" y="358.6" width="27.2" height="27" rx="5.2" fill="url(#cbg)" stroke="#9d9d9d" stroke-width="1.3"/>
<g fill="#000"><rect x="386" y="394.3" width="3" height="27.4"/><rect x="390" y="394.3" width="20" height="3.1"/><rect x="407" y="394.3" width="3" height="17.6"/><rect x="390" y="409.1" width="20" height="2.8"/></g>
<rect x="104.4" y="394.6" width="27.2" height="27" rx="5.2" fill="url(#cbg)" stroke="#9d9d9d" stroke-width="1.3"/>
<path d="M13.1 437.2 L30.8 437.2 L22 451.2 Z" fill="#757575"/>
<rect x="64.4" y="430.6" width="27.2" height="27" rx="5.2" fill="url(#cbg)" stroke="#9d9d9d" stroke-width="1.3"/>
<g fill="#000"><rect x="386" y="466.3" width="3" height="27.4"/><rect x="390" y="466.3" width="20" height="3.1"/><rect x="407" y="466.3" width="3" height="17.6"/><rect x="390" y="481.1" width="20" height="2.8"/></g>
<rect x="104.4" y="466.6" width="27.2" height="27" rx="5.2" fill="url(#cbg)" stroke="#9d9d9d" stroke-width="1.3"/>
<g fill="#000"><rect x="386" y="502.3" width="3" height="27.4"/><rect x="390" y="502.3" width="20" height="3.1"/><rect x="407" y="502.3" width="3" height="17.6"/><rect x="390" y="517.1" width="20" height="2.8"/></g>
<rect x="104.4" y="502.6" width="27.2" height="27" rx="5.2" fill="url(#cbg)" stroke="#9d9d9d" stroke-width="1.3"/>
<g fill="#000"><rect x="386" y="538.3" width="3" height="27.4"/><rect x="390" y="538.3" width="20" height="3.1"/><rect x="407" y="538.3" width="3" height="17.6"/><rect x="390" y="553.1" width="20" height="2.8"/></g>
<rect x="104.4" y="538.6" width="27.2" height="27" rx="5.2" fill="url(#cbg)" stroke="#9d9d9d" stroke-width="1.3"/>
<g fill="#000"><rect x="386" y="574.3" width="3" height="27.4"/><rect x="390" y="574.3" width="20" height="3.1"/><rect x="407" y="574.3" width="3" height="17.6"/><rect x="390" y="589.1" width="20" height="2.8"/></g>
<rect x="104.4" y="574.6" width="27.2" height="27" rx="5.2" fill="url(#cbg)" stroke="#9d9d9d" stroke-width="1.3"/>
<g fill="#000"><rect x="386" y="610.3" width="3" height="27.4"/><rect x="390" y="610.3" width="20" height="3.1"/><rect x="407" y="610.3" width="3" height="17.6"/><rect x="390" y="625.1" width="20" height="2.8"/></g>
<rect x="104.4" y="610.6" width="27.2" height="27" rx="5.2" fill="url(#cbg)" stroke="#9d9d9d" stroke-width="1.3"/>
<g fill="#000"><rect x="386" y="646.3" width="3" height="27.4"/><rect x="390" y="646.3" width="20" height="3.1"/><rect x="407" y="646.3" width="3" height="17.6"/><rect x="390" y="661.1" width="20" height="2.8"/></g>
<rect x="104.4" y="646.6" width="27.2" height="27" rx="5.2" fill="url(#cbg)" stroke="#9d9d9d" stroke-width="1.3"/>
<g fill="#000"><rect x="386" y="682.3" width="3" height="27.4"/><rect x="390" y="682.3" width="20" height="3.1"/><rect x="407" y="682.3" width="3" height="17.6"/><rect x="390" y="697.1" width="20" height="2.8"/></g>
<rect x="104.4" y="682.6" width="27.2" height="27" rx="5.2" fill="url(#cbg)" stroke="#9d9d9d" stroke-width="1.3"/>
<defs><linearGradient id="cbg" x1="0" y1="0" x2="0" y2="1"><stop offset="0" stop-color="#e6e6e6"/><stop offset="0.18" stop-color="#fdfdfd"/><stop offset="1" stop-color="#ffffff"/></linearGradient></defs>
<path d="M2909.5 0 Q2914.6 3 2914.6 9 V0 Z" fill="#f2f2f2"/>
<path d="M2909.6 -0.3 Q2914.1 3 2914.1 9 V1800" fill="none" stroke="#9d9d9d" stroke-width="1.6"/>
<path d="M2912.6 12 V1800" fill="none" stroke="#ffffff" stroke-opacity="0.35" stroke-width="1"/>
</svg>
</body></html>
